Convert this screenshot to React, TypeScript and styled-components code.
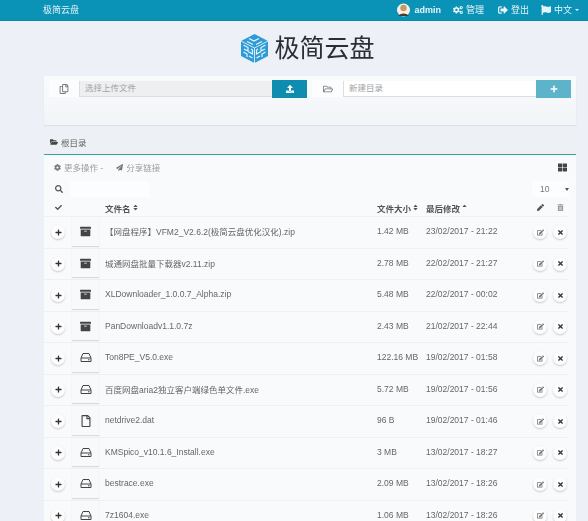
import React from 'react';
import styled, { createGlobalStyle } from 'styled-components';
import {
  FaArchive, FaCheck, FaCog, FaCogs, FaEdit, FaFlag, FaFolderOpen, FaPaperPlane, FaPen, FaPlus,
  FaRegCopy, FaRegFile, FaRegFolderOpen, FaSearch, FaSignOutAlt, FaSort,
  FaSortUp, FaThLarge, FaTimes, FaTrashAlt, FaUpload,
} from 'react-icons/fa';

const GlobalStyle = createGlobalStyle`
  html, body { margin: 0; padding: 0; }
  body {
    background: #edf1f7;
    color: #555;
    font-family: "Liberation Sans", "Noto Sans CJK SC", sans-serif;
    font-size: 8.5px;
    overflow: hidden;
  }
`;

const Page = styled.div`
  height: 521px;
  overflow: hidden;
  filter: blur(0.45px);
`;

const NavBar = styled.div`
  height: 21px;
  box-sizing: border-box;
  background: #0a93b6;
  border-bottom: 1px solid #0c88a8;
  color: #e6f4f8;
  display: flex;
  align-items: center;
  justify-content: space-between;
  padding: 0 9px 1px 43px;
`;

const Brand = styled.div`
  font-size: 9px;
`;

const NavMenu = styled.div`
  display: flex;
  align-items: center;
  gap: 12px;
  font-size: 9px;
`;

const NavItem = styled.div<{ $bold?: boolean; $push?: number }>`
  display: flex;
  align-items: center;
  gap: 3px;
  margin-left: ${(p) => p.$push ?? 0}px;
  font-weight: ${(p) => (p.$bold ? 700 : 400)};
  svg { font-size: 10px; }
`;

const Avatar = styled.svg`
  width: 13px;
  height: 14px;
  margin-right: 1px;
`;

const NavCaret = styled.span`
  border-left: 2px solid transparent;
  border-right: 2px solid transparent;
  border-top: 2px solid #e6f4f8;
`;

const LogoRow = styled.div`
  height: 55px;
  display: flex;
  align-items: center;
  justify-content: center;
  gap: 5px;
  padding-left: 27px;
  box-sizing: border-box;
`;

const LogoText = styled.div`
  font-size: 25px;
  color: #2b2f33;
  line-height: 1;
`;

const Container = styled.div`
  margin: 0 12px 0 44px;
`;

const UploadCard = styled.div`
  height: 49px;
  background: linear-gradient(#f9fafc, #f2f5f8);
  box-shadow: 0 1px 1px #dde2e8;
  padding: 4px 5px;
  box-sizing: border-box;
  display: grid;
  grid-template-columns: 258px 259px;
  column-gap: 5px;
`;

const InputGroup = styled.div`
  display: flex;
  height: 18px;
  align-items: flex-start;
`;

const Addon = styled.div<{ $w: number }>`
  flex: 0 0 ${(p) => p.$w}px;
  height: 17px;
  background: #fcfdfe;
  display: flex;
  align-items: center;
  justify-content: center;
  color: #777;
  font-size: 10px;
`;

const FakeInput = styled.div<{ $disabled?: boolean }>`
  flex: 1;
  height: 15px;
  margin-top: 0.5px;
  background: ${(p) => (p.$disabled ? '#eeeff0' : '#ffffff')};
  border-bottom: 1px solid #dcdfe2;
  border-left: 1px solid #dcdfe2;
  color: #a0a3a6;
  padding-left: 5px;
  line-height: 14px;
  font-size: 8.5px;
`;

const GroupButton = styled.div<{ $light?: boolean }>`
  flex: 0 0 35px;
  height: 18px;
  background: ${(p) => (p.$light ? '#5db4ca' : '#0e8db0')};
  color: #fff;
  display: flex;
  align-items: center;
  justify-content: center;
  font-size: 8px;
`;

const Panel = styled.div`
  margin-top: 5px;
  background: #f8fafc;
`;

const PanelHeader = styled.div`
  height: 24px;
  background: #edf0f5;
  border-bottom: 1px solid #35a491;
  display: flex;
  align-items: center;
  gap: 3px;
  padding-left: 6px;
  font-size: 8.5px;
  color: #666;
  svg { color: #444; font-size: 8px; }
`;

const Toolbar = styled.div`
  height: 24px;
  display: flex;
  align-items: center;
  padding: 0 9px 0 10px;
  gap: 13px;
  color: #9a9da0;
  font-size: 8.5px;
`;

const ToolLink = styled.div`
  display: flex;
  align-items: center;
  gap: 3px;
  svg { color: #777; font-size: 7px; }
`;

const GridIcon = styled.div`
  margin-left: auto;
  color: #444;
  font-size: 9px;
  display: flex;
`;

const SearchRow = styled.div`
  height: 20px;
  display: flex;
  align-items: center;
  padding: 0 7px 0 11px;
`;

const SearchIcon = styled.div`
  display: flex;
  color: #555;
  font-size: 8px;
  width: 15px;
`;

const SearchField = styled.div`
  width: 80px;
  height: 16px;
  background: #fcfdfe;
`;

const PageSize = styled.div`
  margin-left: auto;
  width: 37px;
  height: 16px;
  background: #fcfdfe;
  display: flex;
  align-items: center;
  justify-content: space-between;
  padding-left: 8px;
  box-sizing: border-box;
  color: #777;
  font-size: 8.5px;
`;

const Caret = styled.span`
  border-left: 2px solid transparent;
  border-right: 2px solid transparent;
  border-top: 3px solid #555;
`;

const TableGrid = styled.div`
  display: grid;
  grid-template-columns: 28px 27px 6px 272px 49px 101px 26px 14px;
  align-items: center;
`;

const HeadRow = styled(TableGrid)`
  height: 17px;
  font-weight: 700;
  font-size: 8.5px;
  color: #555;
`;

const HeadCell = styled.div<{ $col: number; $center?: boolean; $muted?: boolean }>`
  grid-column: ${(p) => p.$col};
  display: flex;
  align-items: center;
  gap: 1px;
  justify-content: ${(p) => (p.$center ? 'center' : 'flex-start')};
  color: ${(p) => (p.$muted ? '#999' : 'inherit')};
  svg { font-size: 7px; }
`;

const Row = styled(TableGrid)`
  height: 31.5px;
  margin-right: 8px;
  border-top: 1px solid #eef1f4;
  box-sizing: border-box;
`;

const RoundButton = styled.div<{ $col: number; $soft?: boolean }>`
  grid-column: ${(p) => p.$col};
  justify-self: center;
  width: 14px;
  height: 14px;
  border-radius: 50%;
  background: #fdfdfe;
  box-shadow: 0 1px 2px #c7cacd;
  display: flex;
  align-items: center;
  justify-content: center;
  color: ${(p) => (p.$soft ? '#777' : '#333')};
  font-size: 7px;
`;

const TypeIcon = styled.div`
  grid-column: 2;
  height: 28px;
  margin-top: -1px;
  background: #f7f9fb;
  box-shadow: 0 1px 1px #d8dbde;
  display: flex;
  align-items: center;
  justify-content: center;
  font-size: 11px;
  color: #444;
`;

const FileName = styled.div`
  grid-column: 4;
  color: #666;
  white-space: nowrap;
  padding-bottom: 2px;
`;

const CellText = styled.div<{ $col: number }>`
  grid-column: ${(p) => p.$col};
  color: #666;
  white-space: nowrap;
  padding-bottom: 2px;
`;

interface FileRow {
  name: string;
  size: string;
  date: string;
  kind: 'archive' | 'exe' | 'file';
}

const files: FileRow[] = [
  { name: '【网盘程序】VFM2_V2.6.2(极简云盘优化汉化).zip', size: '1.42 MB', date: '23/02/2017 - 21:22', kind: 'archive' },
  { name: '城通网盘批量下载器v2.11.zip', size: '2.78 MB', date: '22/02/2017 - 21:27', kind: 'archive' },
  { name: 'XLDownloader_1.0.0.7_Alpha.zip', size: '5.48 MB', date: '22/02/2017 - 00:02', kind: 'archive' },
  { name: 'PanDownloadv1.1.0.7z', size: '2.43 MB', date: '21/02/2017 - 22:44', kind: 'archive' },
  { name: 'Ton8PE_V5.0.exe', size: '122.16 MB', date: '19/02/2017 - 01:58', kind: 'exe' },
  { name: '百度网盘aria2独立客户端绿色单文件.exe', size: '5.72 MB', date: '19/02/2017 - 01:56', kind: 'exe' },
  { name: 'netdrive2.dat', size: '96 B', date: '19/02/2017 - 01:46', kind: 'file' },
  { name: 'KMSpico_v10.1.6_Install.exe', size: '3 MB', date: '13/02/2017 - 18:27', kind: 'exe' },
  { name: 'bestrace.exe', size: '2.09 MB', date: '13/02/2017 - 18:26', kind: 'exe' },
  { name: '7z1604.exe', size: '1.06 MB', date: '13/02/2017 - 18:26', kind: 'exe' },
];

const HddIcon = () => (
  <svg width="12" height="11" viewBox="0 0 12 11" fill="none" stroke="#444" strokeWidth="1">
    <path d="M3 1.5 H9 L11 6 V9.5 H1 V6 Z" />
    <path d="M1 6 H11" />
    <path d="M8 7.8 H9.5" />
  </svg>
);

const FileIcon = styled(FaRegFile)`
  font-size: 12px;
`;

const kindIcon = (kind: FileRow['kind']) => {
  if (kind === 'archive') return <FaArchive />;
  if (kind === 'exe') return <HddIcon />;
  return <FileIcon />;
};

const Logo = () => (
  <svg width="29" height="31" viewBox="0 0 29 31">
    <path d="M14.5 1 L28 8 V23 L14.5 30 L1 23 V8 Z" fill="#2f9bd6" />
    <path d="M14.5 15 L28 8 M14.5 15 L1 8 M14.5 15 V30" stroke="#fff" strokeWidth="0.8" fill="none" />
    <path d="M9 5.5 L14 8 L19 5.5 M7 8.5 L13 11.5 M22 8.5 L16 11.5" stroke="#e8f5fc" strokeWidth="1.2" fill="none" />
    <path d="M3.5 12 L8 14.5 V18 L4 16 M11 16 L12.5 17 V21 L8 18.5 M3.5 19 L7 21 V24 M9 23 L12.5 25" stroke="#e8f5fc" strokeWidth="1.2" fill="none" />
    <path d="M25.5 12 L21 14.5 V18 L25 16 M18 16 L16.5 17 V21 L21 18.5 M25.5 19 L22 21 V24 M20 23 L16.5 25" stroke="#e8f5fc" strokeWidth="1.2" fill="none" />
  </svg>
);

const App: React.FC = () => {
  return (
    <Page>
      <GlobalStyle />
      <NavBar>
        <Brand>极简云盘</Brand>
        <NavMenu>
          <NavItem $bold>
            <Avatar viewBox="0 0 13 14">
              <circle cx="6.5" cy="7" r="6.5" fill="#f4f1ec" />
              <circle cx="6.5" cy="5" r="3.2" fill="#c89a63" />
              <path d="M1.5 13 C2 9.5 11 9.5 11.5 13 Z" fill="#4a3a2c" />
            </Avatar>
            admin
          </NavItem>
          <NavItem><FaCogs />管理</NavItem>
          <NavItem $push={2}><FaSignOutAlt />登出</NavItem>
          <NavItem><FaFlag />中文 <NavCaret /></NavItem>
        </NavMenu>
      </NavBar>

      <LogoRow>
        <Logo />
        <LogoText>极简云盘</LogoText>
      </LogoRow>

      <Container>
        <UploadCard>
          <InputGroup>
            <Addon $w={30}><FaRegCopy /></Addon>
            <FakeInput $disabled>选择上传文件</FakeInput>
            <GroupButton><FaUpload /></GroupButton>
          </InputGroup>
          <InputGroup>
            <Addon $w={31}><FaRegFolderOpen /></Addon>
            <FakeInput>新建目录</FakeInput>
            <GroupButton $light><FaPlus /></GroupButton>
          </InputGroup>
        </UploadCard>

        <Panel>
          <PanelHeader><FaFolderOpen />根目录</PanelHeader>
          <Toolbar>
            <ToolLink><FaCog />更多操作 -</ToolLink>
            <ToolLink><FaPaperPlane />分享链接</ToolLink>
            <GridIcon><FaThLarge /></GridIcon>
          </Toolbar>
          <SearchRow>
            <SearchIcon><FaSearch /></SearchIcon>
            <SearchField />
            <PageSize>10<Caret /></PageSize>
          </SearchRow>
          <HeadRow>
            <HeadCell $col={1} $center><FaCheck /></HeadCell>
            <HeadCell $col={4}>文件名<FaSort /></HeadCell>
            <HeadCell $col={5}>文件大小<FaSort /></HeadCell>
            <HeadCell $col={6}>最后修改<FaSortUp /></HeadCell>
            <HeadCell $col={7} $center><FaPen /></HeadCell>
            <HeadCell $col={8} $center $muted><FaTrashAlt /></HeadCell>
          </HeadRow>
          {files.map((f) => (
            <Row key={f.name}>
              <RoundButton $col={1}><FaPlus /></RoundButton>
              <TypeIcon>{kindIcon(f.kind)}</TypeIcon>
              <FileName>{f.name}</FileName>
              <CellText $col={5}>{f.size}</CellText>
              <CellText $col={6}>{f.date}</CellText>
              <RoundButton $col={7} $soft><FaEdit /></RoundButton>
              <RoundButton $col={8}><FaTimes /></RoundButton>
            </Row>
          ))}
        </Panel>
      </Container>
    </Page>
  );
};

export default App;
